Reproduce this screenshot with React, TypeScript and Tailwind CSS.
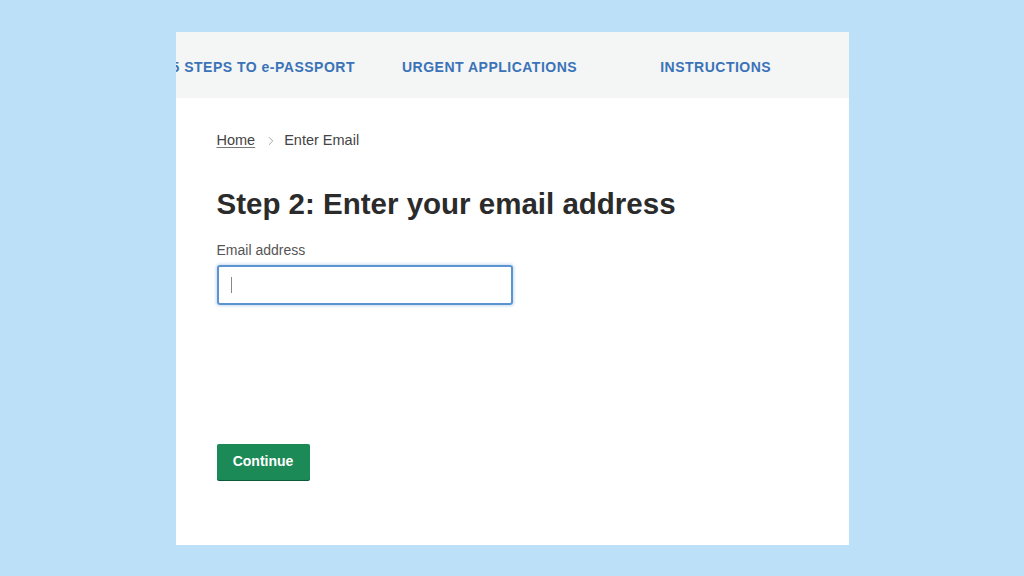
import { ChevronRight } from 'lucide-react';

const navItems = [
  { label: '5 STEPS TO e-PASSPORT', className: 'ml-[-4px]' },
  { label: 'URGENT APPLICATIONS', className: 'ml-[47px]' },
  { label: 'INSTRUCTIONS', className: 'ml-[83px]' },
];

export default function App() {
  return (
    <div className="w-[1024px] h-[576px] bg-[#bde0f9] flex items-start justify-center pt-[32px] font-['Liberation_Sans',Arial,sans-serif]">
      <div className="w-[673px] h-[513px] bg-white flex flex-col overflow-hidden">
        {/* Top navigation */}
        <nav className="h-[66px] bg-[#f4f5f5] flex items-center pt-[5px] whitespace-nowrap">
          {navItems.map((item) => (
            <a
              key={item.label}
              className={`${item.className} text-[14px] font-bold text-[#3a73b8] tracking-[0.5px]`}
            >
              {item.label}
            </a>
          ))}
        </nav>

        {/* Content */}
        <div className="pl-[41px] flex flex-col">
          {/* Breadcrumb */}
          <div className="mt-[32px] flex items-center text-[14.5px] text-[#444]">
            <a className="underline underline-offset-2 decoration-[#777]">Home</a>
            <ChevronRight size={14} strokeWidth={1.5} className="ml-[9px] mr-[6px] text-[#999]" />
            <span>Enter Email</span>
          </div>

          <h1 className="mt-[35px] text-[29.5px] leading-[34px] font-bold text-[#2b2b2b]">
            Step 2: Enter your email address
          </h1>

          <label className="mt-[21px] text-[14px] text-[#555] leading-[16px]">Email address</label>
          <div className="mt-[7px] w-[296px] h-[40px] rounded-[3px] border-2 border-[#5b94d0] shadow-[0_0_3px_1px_rgba(91,148,208,0.35)] flex items-center pl-[12px]">
            <span className="w-[1px] h-[16px] bg-[#888]" />
          </div>

          <button className="mt-[139px] w-[93px] h-[36px] bg-[#1b8a57] rounded-[2px] text-white text-[14px] font-bold shadow-[0_1px_0_#0b5c36]">
            Continue
          </button>
        </div>
      </div>
    </div>
  );
}
